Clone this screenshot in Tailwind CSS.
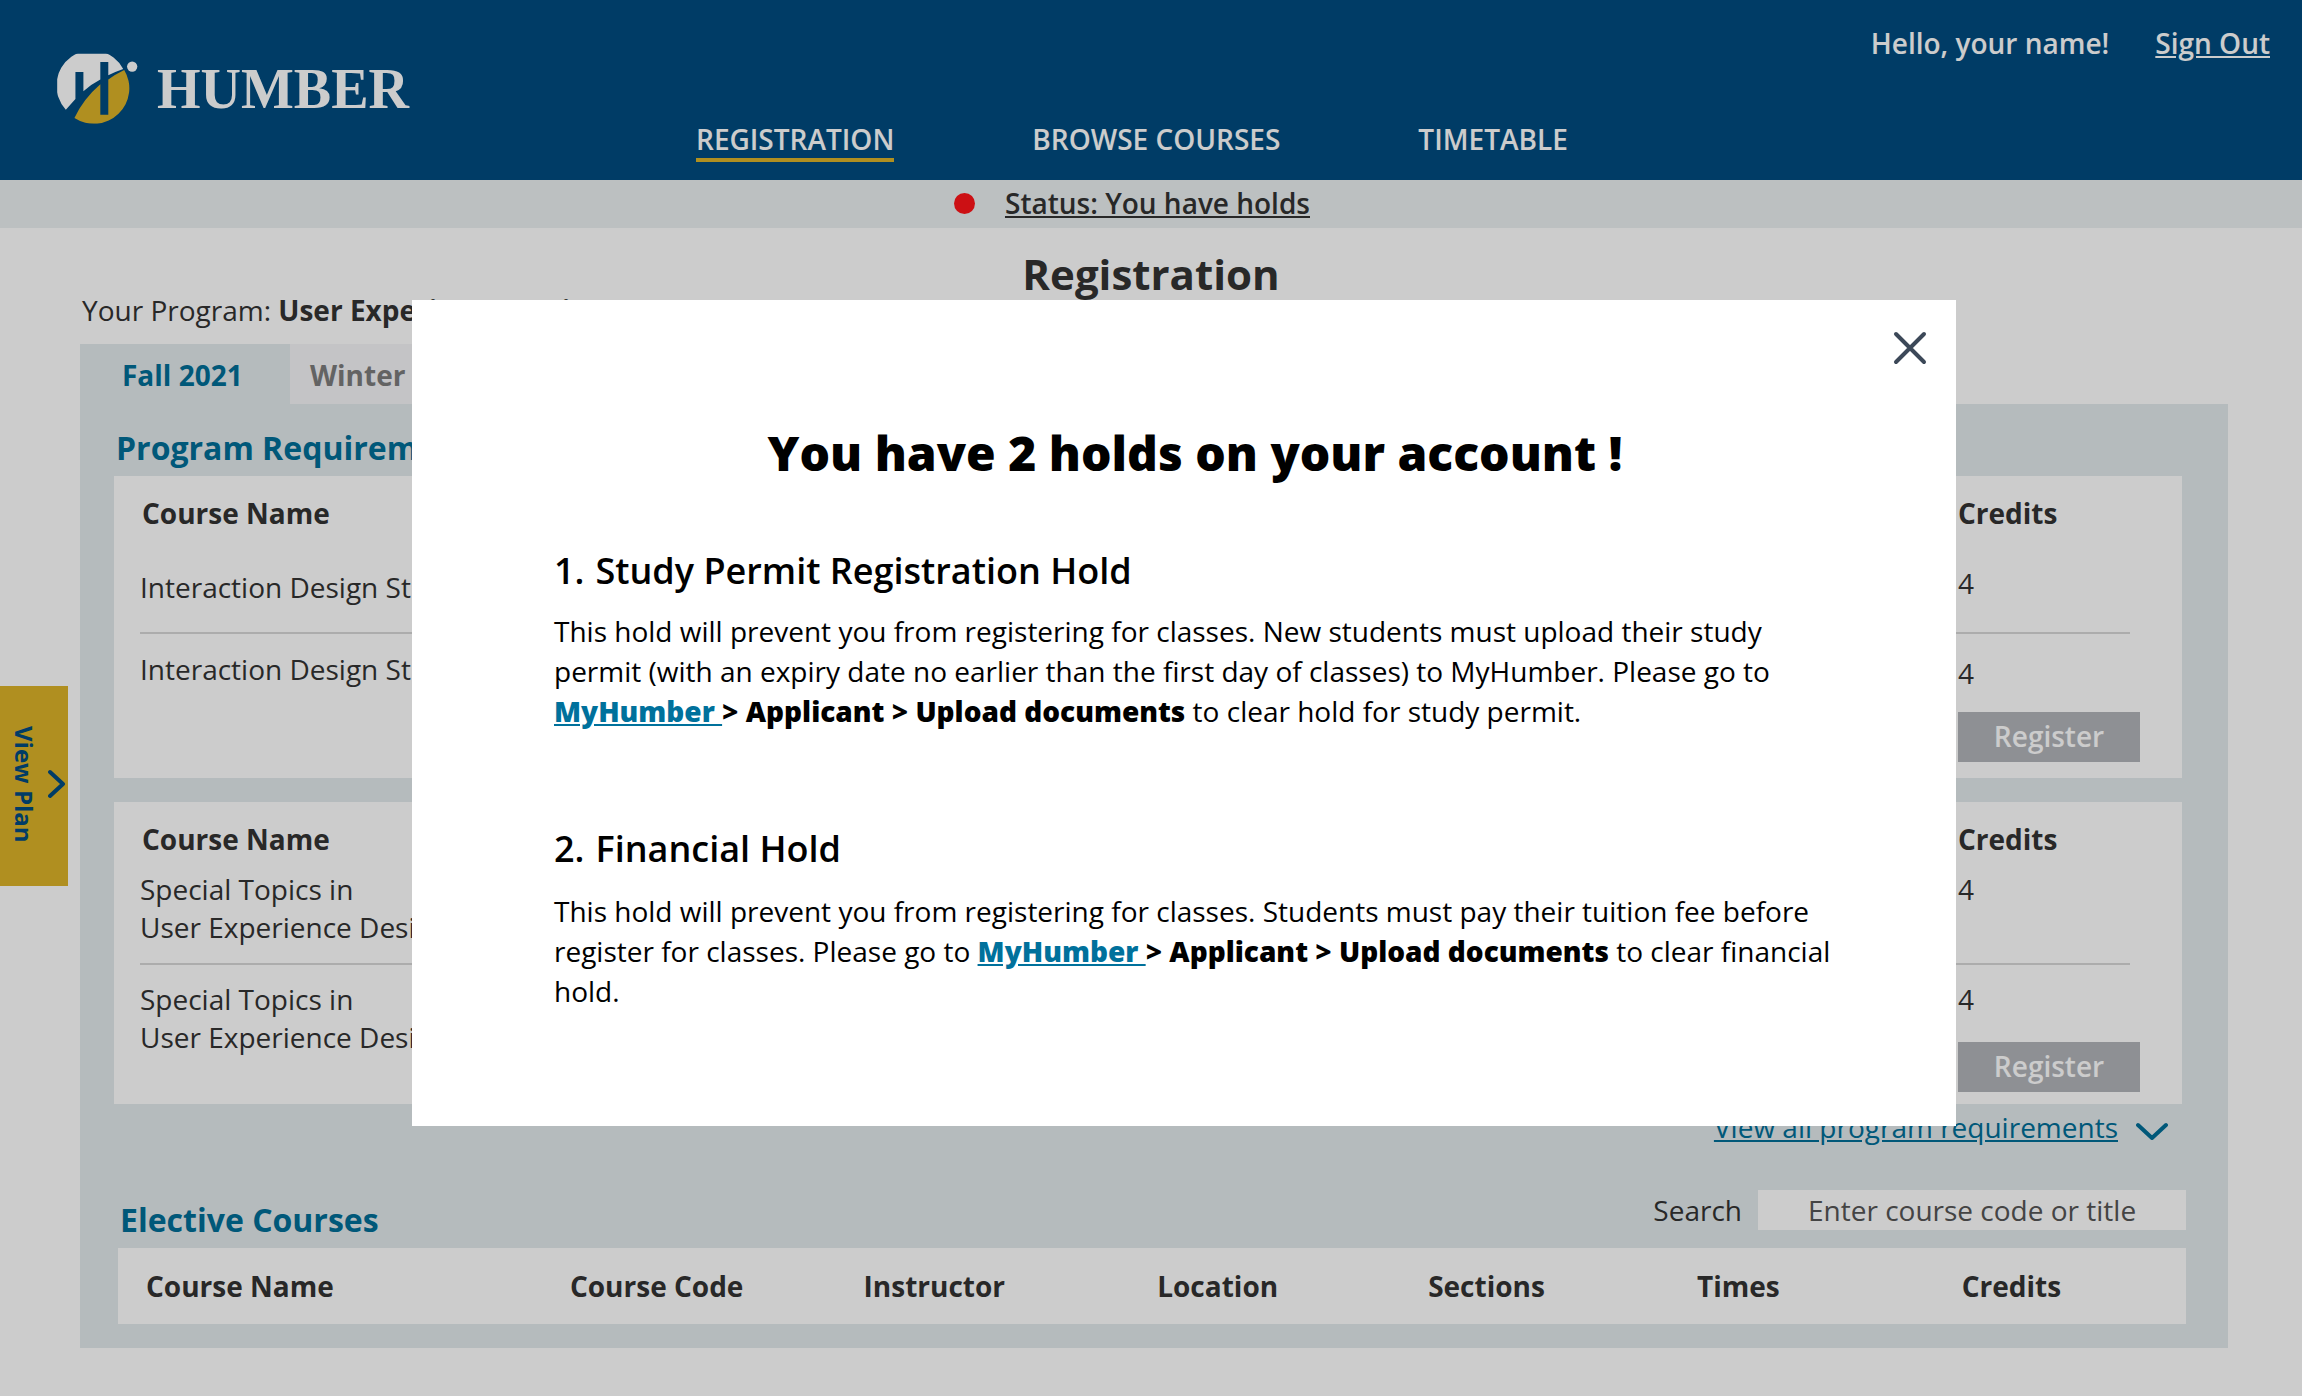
<!DOCTYPE html>
<html lang="en">
<head>
<meta charset="utf-8">
<title>Humber – Registration</title>
<script src="https://cdn.jsdelivr.net/npm/@tailwindcss/browser@4"></script>
</head>
<body class="min-h-screen bg-white font-['Open_Sans','Noto_Sans',sans-serif] text-[28px] leading-[38px] text-[#333333]">

<header class="grid h-[180px] grid-cols-[30%_1fr_auto] bg-[#004b80] pr-8 font-semibold text-white">
  <a href="#" class="flex items-start gap-[18px] pl-[57px] pt-[52px]">
    <svg class="h-[73px] w-[82px]" viewBox="50 66 246 220" aria-hidden="true">
      <defs><clipPath id="crop"><rect x="50" y="71" width="246" height="211"/></clipPath></defs>
      <g clip-path="url(#crop)">
        <path fill="#ffffff" d="M76 240L105 208V126H129V184Q150 165 180 149V96H204V136Q228 124 249 117A107 107 0 1 0 76 240Z"/>
        <path fill="#dcb329" d="M102 265Q128 208 180 163V255H204V149Q225 133 252 120A107 107 0 0 1 102 265Z"/>
        <circle cx="276" cy="110" r="15.5" fill="#ffffff"/>
      </g>
    </svg>
    <span class="pt-[5px] font-['Liberation_Serif',serif] text-[56px] font-bold leading-[64px]">HUMBER</span>
  </a>
  <nav class="flex items-end gap-[138px] pb-[18px] pl-[15px]">
    <a href="#" class="border-b-4 border-[#dcb329]">REGISTRATION</a>
    <a href="#" class="border-b-4 border-transparent">BROWSE COURSES</a>
    <a href="#" class="border-b-4 border-transparent">TIMETABLE</a>
  </nav>
  <div class="flex items-start gap-[46px] pt-6">
    <span>Hello, your name!</span>
    <a href="#" class="underline">Sign Out</a>
  </div>
</header>

<div class="flex h-12 items-center justify-center gap-[30px] bg-[#ebf0f2] pb-0.5 pr-[38px]">
  <span class="size-[21px] rounded-full bg-[#ff1519]"></span>
  <a href="#" class="font-semibold underline">Status: You have holds</a>
</div>

<main class="pt-7">
  <h1 class="text-center text-[42px] font-bold leading-9">Registration</h1>
  <div class="pl-20 pr-[74px]">
    <p class="pl-0.5 pt-0.5 leading-8">Your Program: <b>User Experience Design</b></p>
    <div class="mt-[18px] flex h-[60px] font-bold" role="tablist">
      <button role="tab" aria-selected="true" class="w-[210px] bg-[#e3eaed] pl-[42px] pt-0.5 text-left text-[#006e98]">Fall 2021</button>
      <button role="tab" aria-selected="false" class="w-[210px] bg-[#f5f5f8] pl-5 pt-0.5 text-left text-[#7c7c7c]">Winter 2022</button>
    </div>

    <div class="bg-[#e3eaed] pb-6 pl-[34px] pr-[42px] pt-[22px]">
      <div class="pr-1">
        <h2 class="mb-1.5 pl-0.5 text-[32px] font-bold leading-[44px] text-[#006e98]">Program Requirements</h2>

        <section class="bg-white pb-4 pl-[26px] pr-[52px]">
          <table class="w-full table-fixed text-left">
            <thead>
              <tr class="h-[70px] align-top">
                <th class="pl-0.5 pt-[18px]">Course Name</th>
                <th class="w-[172px] pt-[18px]">Credits</th>
              </tr>
            </thead>
            <tbody class="align-top">
              <tr class="h-[87px] border-b-2 border-[#d7d7d7]">
                <td class="pt-[22px]">Interaction Design Studio 1</td>
                <td class="pt-[18px]">4</td>
              </tr>
              <tr>
                <td class="pt-4">Interaction Design Studio 2</td>
                <td class="pt-5">4
                  <button class="mt-5 block h-[50px] w-[182px] bg-[#b2b5ba] pb-0.5 font-semibold text-white">Register</button>
                </td>
              </tr>
            </tbody>
          </table>
        </section>

        <section class="mt-6 bg-white pb-3 pl-[26px] pr-[52px]">
          <table class="w-full table-fixed text-left">
            <thead>
              <tr class="h-16 align-top">
                <th class="pl-0.5 pt-[18px]">Course Name</th>
                <th class="w-[172px] pt-[18px]">Credits</th>
              </tr>
            </thead>
            <tbody class="align-top">
              <tr class="h-[98px] border-b-2 border-[#d7d7d7]">
                <td class="pt-1">Special Topics in<br>User Experience Design 1</td>
                <td class="pt-1">4</td>
              </tr>
              <tr>
                <td class="pt-[15px]">Special Topics in<br>User Experience Design 2</td>
                <td class="pt-[15px]">4
                  <button class="mt-6 block h-[50px] w-[182px] bg-[#b2b5ba] pb-0.5 font-semibold text-white">Register</button>
                </td>
              </tr>
            </tbody>
          </table>
        </section>

        <div class="mt-1 flex justify-end pr-3.5">
          <a href="#" class="flex items-center gap-[18px] text-[#006e98]">
            <span class="underline">View all program requirements</span>
            <svg class="mt-2 h-[18px] w-8" viewBox="0 0 32 18" fill="none" stroke="currentColor" stroke-width="4" stroke-linecap="round" stroke-linejoin="round" aria-hidden="true"><path d="M2 3L16 16L30 3"/></svg>
          </a>
        </div>
      </div>

      <section class="mt-11 pl-1">
        <div class="flex items-start justify-between">
          <h2 class="pl-0.5 pt-2 text-[32px] font-bold leading-[44px] text-[#006e98]">Elective Courses</h2>
          <div class="flex items-center gap-4">
            <label for="search">Search</label>
            <input id="search" type="text" placeholder="Enter course code or title" class="h-10 w-[428px] bg-white pl-[50px] placeholder:text-[#555555]">
          </div>
        </div>
        <table class="mt-1.5 h-[76px] w-full table-fixed bg-white text-left">
          <thead>
            <tr>
              <th class="w-[20.5%] pl-7">Course Name</th>
              <th class="w-[14.2%] pl-7">Course Code</th>
              <th class="w-[14.2%] pl-7">Instructor</th>
              <th class="w-[13.1%] pl-7">Location</th>
              <th class="w-[13%] pl-7">Sections</th>
              <th class="w-[12.8%] pl-7">Times</th>
              <th class="w-[12.2%] pl-7">Credits</th>
            </tr>
          </thead>
        </table>
      </section>
    </div>
  </div>
</main>

<!-- Plan drawer handle, pinned to the left edge -->
<button class="absolute left-0 top-[686px] flex h-[200px] w-[68px] items-center gap-1.5 bg-[#dcb329] pb-1 pl-1.5 text-[#004b80]">
  <span class="text-2xl font-bold leading-9 [writing-mode:vertical-rl]">View Plan</span>
  <svg class="h-[30px] w-[18px] shrink-0" viewBox="0 0 18 30" fill="none" stroke="currentColor" stroke-width="4" stroke-linecap="round" stroke-linejoin="round" aria-hidden="true"><path d="M2 3L15 15L2 27"/></svg>
</button>

<!-- Holds dialog -->
<div class="fixed inset-0 bg-black/20 pl-[412px] pr-[346px] pt-[300px]">
  <div role="dialog" aria-modal="true" aria-labelledby="holds-title" class="relative bg-white pb-[115px] pl-[142px] pr-[120px] pt-[121px] leading-10 text-black">
    <button aria-label="Close" class="absolute right-[28px] top-[30px]">
      <svg class="size-9" viewBox="0 0 36 36" fill="none" stroke="#3c4858" stroke-width="4" stroke-linecap="round" aria-hidden="true"><path d="M4 4L32 32M32 4L4 32"/></svg>
    </button>
    <h2 id="holds-title" class="text-center text-5xl font-extrabold leading-[64px]">You have 2 holds on your account !</h2>
    <h3 class="mt-[62px] flex gap-[11px] text-4xl font-semibold leading-[48px]"><span>1.</span><span>Study Permit Registration Hold</span></h3>
    <p class="mt-4">This hold will prevent you from registering for classes. New students must upload their study permit (with an expiry date no earlier than the first day of classes) to MyHumber. Please go to <a href="#" class="font-extrabold text-[#00719c] underline">MyHumber </a><b class="font-extrabold">&gt; Applicant &gt; Upload documents</b> to clear hold for study permit.</p>
    <h3 class="mt-[94px] flex gap-[11px] text-4xl font-semibold leading-[48px]"><span>2.</span><span>Financial Hold</span></h3>
    <p class="mt-[18px]">This hold will prevent you from registering for classes. Students must pay their tuition fee before register for classes. Please go to <a href="#" class="font-extrabold text-[#00719c] underline">MyHumber </a><b class="font-extrabold">&gt; Applicant &gt; Upload documents</b> to clear financial hold.</p>
  </div>
</div>
</body>
</html>
